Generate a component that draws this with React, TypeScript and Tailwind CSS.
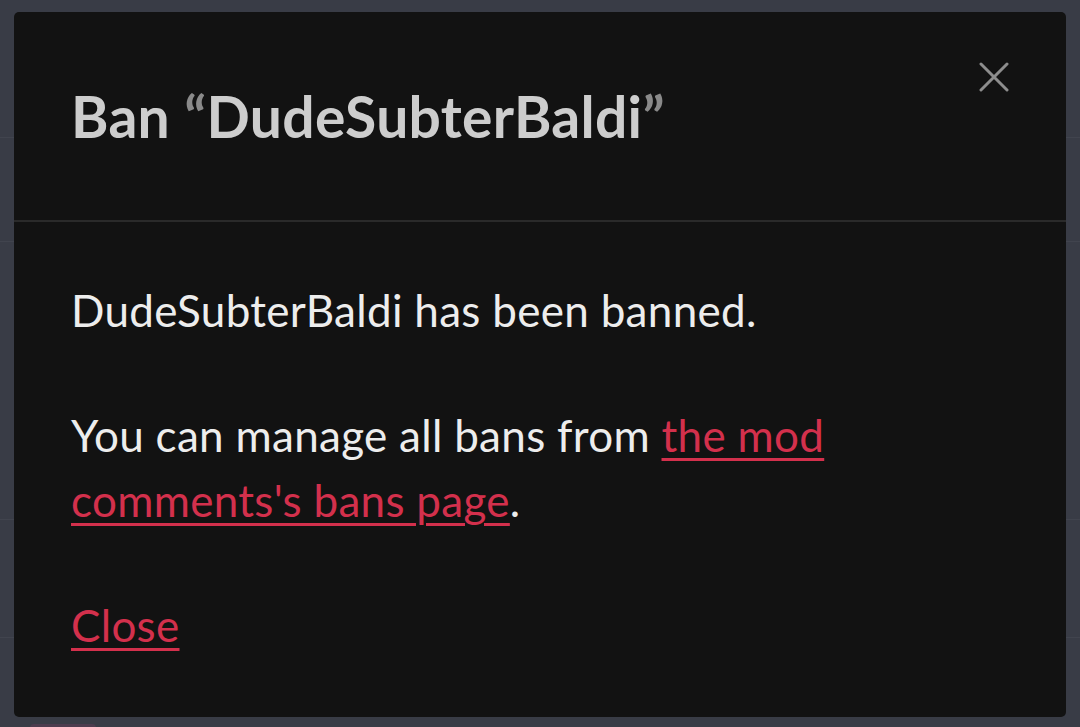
export default function App() {
  return (
    <div className="relative h-[727px] w-full overflow-hidden bg-[#393c46] font-['Lato',sans-serif]">
      {/* page behind the overlay */}
      <div className="flex flex-col">
        <div className="h-[138px] border-b border-[#41444e]" />
        <div className="h-[104px] border-b border-[#41444e]" />
        <div className="h-[278px] border-b border-[#41444e]" />
        <div className="h-[118px] border-b border-[#41444e]" />
        <div className="flex h-[90px] items-end pl-[30px]">
          <div className="h-[4px] w-[66px] rounded-t bg-[#4d3c4e]" />
        </div>
      </div>

      <div className="absolute left-[14px] top-[12px] flex h-[705px] w-[1052px] flex-col rounded-[5px] bg-[#121212]">
        <div className="flex h-[210px] justify-between border-b-2 border-[#2a2a2a] px-[57px]">
          <h1 className="self-center text-[57px] font-bold leading-[1.2] tracking-[0.3px] text-[#cdcdcd]">
            Ban <span className="text-[#8a8a8a]">“</span>DudeSubterBaldi<span className="text-[#8a8a8a]">”</span>
          </h1>
          <button className="mt-[50px] h-[30px] w-[30px] self-start text-[#8d8d8d]">
            <svg viewBox="0 0 30 30" className="h-[30px] w-[30px]" fill="none" stroke="currentColor" strokeWidth="3" strokeLinecap="round">
              <path d="M2 2L28 28M28 2L2 28" />
            </svg>
          </button>
        </div>

        <div className="max-w-[960px] px-[57px] pt-[56px] text-[44px] leading-[65px] tracking-[0.3px] text-[#ededed]">
          <p>DudeSubterBaldi has been banned.</p>
          <p className="mt-[60px]">
            You can manage all bans from{" "}
            <a href="#" className="text-[#d3304c] underline decoration-[3px] underline-offset-[6px]">
              the mod comments's bans page
            </a>
            .
          </p>
          <p className="mt-[60px]">
            <a href="#" className="text-[#d3304c] underline decoration-[3px] underline-offset-[6px]">
              Close
            </a>
          </p>
        </div>
      </div>
    </div>
  )
}
